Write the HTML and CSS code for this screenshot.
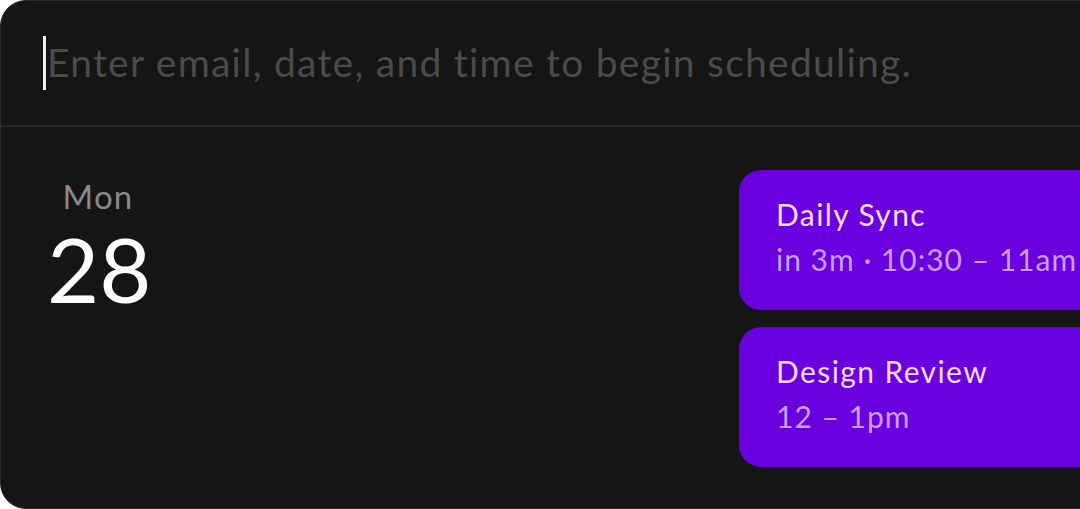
FILE: index.html
```html
<!DOCTYPE html>
<html lang="en">
<head>
<meta charset="utf-8">
<title>Scheduler</title>
<link rel="stylesheet" href="styles.css">
</head>
<body>
<div class="panel">
  <div class="composer">
    <span class="caret"></span>
    <span class="placeholder">Enter email, date, and time to begin scheduling.</span>
  </div>
  <div class="agenda">
    <div class="day">
      <div class="weekday">Mon</div>
      <div class="date">28</div>
    </div>
    <div class="events">
      <div class="event">
        <div class="event-title">Daily Sync</div>
        <div class="event-time">in 3m · 10:30 – 11am</div>
      </div>
      <div class="event">
        <div class="event-title">Design Review</div>
        <div class="event-time">12 – 1pm</div>
      </div>
    </div>
  </div>
</div>
</body>
</html>
```
FILE: styles.css
```css
html, body {
  margin: 0;
  padding: 0;
  background: #ffffff;
  overflow: hidden;
}
body {
  width: 1080px;
  height: 509px;
  font-family: "Lato", "Noto Sans", sans-serif;
}
.panel {
  box-sizing: border-box;
  width: 1140px;
  height: 509px;
  background: #151515;
  border: 1px solid #2a2a2a;
  border-radius: 26px;
  overflow: hidden;
}
.composer {
  height: 124px;
  display: flex;
  align-items: center;
  padding-left: 42px;
  border-bottom: 2px solid #262626;
}
.caret {
  width: 3px;
  height: 54px;
  background: #f2f2f2;
  margin-right: 1px;
}
.placeholder {
  font-size: 39px;
  letter-spacing: 1.25px;
  color: #4b4b4b;
  line-height: 54px;
  margin-top: -2px;
}
.agenda {
  display: flex;
  padding-top: 43px;
}
.day {
  width: 102px;
  margin-left: 46px;
  text-align: center;
}
.weekday {
  font-size: 33px;
  letter-spacing: 1.2px;
  line-height: 34px;
  color: #8a8a8a;
  margin-top: 9px;
}
.date {
  font-size: 90px;
  line-height: 80px;
  color: #ffffff;
  margin-top: 15px;
}
.events {
  margin-left: auto;
  width: 400px;
  display: flex;
  flex-direction: column;
  gap: 17px;
}
.event {
  height: 140px;
  box-sizing: border-box;
  background: #6a00df;
  border-radius: 22px 0 0 22px;
  padding: 22px 0 0 37px;
}
.event-title {
  font-size: 30px;
  letter-spacing: 1.4px;
  line-height: 45px;
  color: #f3dcff;
}
.event-time {
  font-size: 30px;
  letter-spacing: 1px;
  line-height: 45px;
  color: #c99ef6;
}
```
